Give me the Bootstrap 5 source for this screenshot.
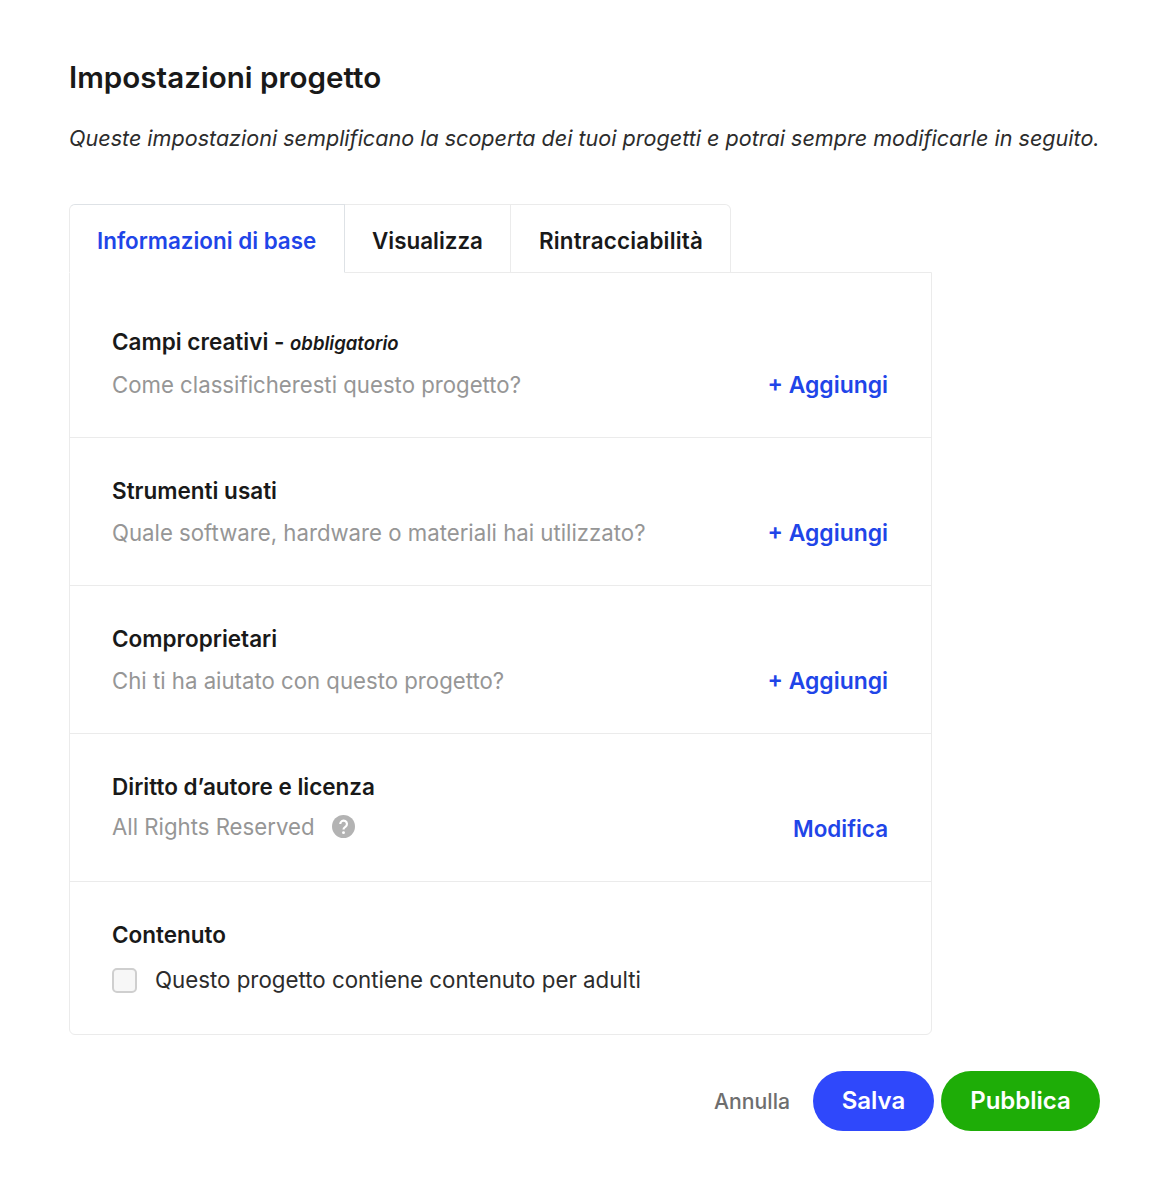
<!DOCTYPE html>
<html lang="it"><head><meta charset="utf-8"><title>Impostazioni progetto</title>
<link href="https://cdn.jsdelivr.net/npm/bootstrap@5.3.0/dist/css/bootstrap.min.css" rel="stylesheet">
<style>
body{font-family:Inter,"Liberation Sans",sans-serif;background:#fff;color:#191919;}
.page-wrap{padding:59px 70px 0 69px;}
.page-title{font-size:29.6px;font-weight:600;line-height:36px;margin:0 0 27px;color:#191919;}
.page-sub{font-size:21.57px;font-style:italic;line-height:32px;margin:0 0 50px;color:#2c2c2c;white-space:nowrap;}
.settings{width:863px;}
.settings .nav-tabs{border:0;margin-bottom:-1px;position:relative;z-index:1;}
.settings .nav-link{height:69px;padding:5px 0 0 27px;font-size:22.4px;font-weight:600;color:#191919;border:1px solid #ebebeb;border-left:0;border-radius:0;display:flex;align-items:center;margin:0;background:#fff;}
.settings .nav-item:nth-child(2) .nav-link{width:166px;}
.settings .nav-item:first-child .nav-link{border-left:1px solid #ebebeb;border-radius:6px 0 0 0;border-bottom-color:#fff;color:#1f45e8;width:276px;padding-left:27px;}
.settings .nav-item:last-child .nav-link{border-radius:0 6px 0 0;width:220px;padding-left:28px;letter-spacing:.2px;}
.panel-box{border:1px solid #ebebeb;border-radius:0 0 6px 6px;height:763px;}
.panel-box .list-group-item{border-color:#ebebeb;padding:38px 43px 0 42px;height:148px;background:transparent;}
.panel-box .list-group-item:first-child{height:165px;padding-top:54px;}
.panel-box .list-group-item:last-child{height:152px;}
.row-title{font-size:22.5px;font-weight:600;line-height:30px;color:#191919;}
.row-title em{font-size:18.5px;font-weight:600;}
.row-body{margin-top:12px;}
.row-body-licence{margin-top:10px;}
.row-body-licence .row-link{position:relative;top:2px;font-size:22.4px;}
.row-body-check{margin-top:15px;}
.row-hint{font-size:22.2px;line-height:30px;color:#969696;}
.row-link{font-size:22.9px;font-weight:600;color:#1f45e8;text-decoration:none;line-height:30px;}
.help-dot{width:23px;height:23px;margin-left:18px;vertical-align:-3px;}
.form-check-input.adult{width:25px;height:25px;margin:0;background-color:#f7f7f7;border:2px solid #cfcfcf;border-radius:5px;}
.adult-label{font-size:22.3px;color:#2c2c2c;line-height:30px;margin-left:18px;}
.cancel-link{font-size:21.2px;font-weight:500;color:#6e6e6e;text-decoration:none;margin-right:16px;padding-top:2px;}
.pill{height:60px;border-radius:30px;border:0;color:#fff;font-size:24px;font-weight:600;padding:0;display:flex;align-items:center;justify-content:center;}
.pill-blue{width:121px;background:#2f48fb;}
.pill-green{width:159px;background:#1ead07;}
.pill-blue:hover{background:#2f48fb;color:#fff;}.pill-green:hover{background:#1ead07;color:#fff;}
.actions{margin-top:36px;gap:7px;}
</style></head><body>
<div class="page-wrap">
<h1 class="page-title">Impostazioni progetto</h1>
<p class="page-sub">Queste impostazioni semplificano la scoperta dei tuoi progetti e potrai sempre modificarle in seguito.</p>
<div class="settings">
<ul class="nav nav-tabs">
<li class="nav-item"><a class="nav-link active" href="#">Informazioni di base</a></li>
<li class="nav-item"><a class="nav-link" href="#">Visualizza</a></li>
<li class="nav-item"><a class="nav-link" href="#">Rintracciabilità</a></li>
</ul>
<div class="panel-box">
<div class="list-group list-group-flush">
<div class="list-group-item"><div class="row-title">Campi creativi - <em>obbligatorio</em></div>
<div class="d-flex justify-content-between row-body"><span class="row-hint">Come classificheresti questo progetto?</span><a class="row-link" href="#">+ Aggiungi</a></div></div>
<div class="list-group-item"><div class="row-title">Strumenti usati</div>
<div class="d-flex justify-content-between row-body"><span class="row-hint">Quale software, hardware o materiali hai utilizzato?</span><a class="row-link" href="#">+ Aggiungi</a></div></div>
<div class="list-group-item"><div class="row-title">Comproprietari</div>
<div class="d-flex justify-content-between row-body"><span class="row-hint">Chi ti ha aiutato con questo progetto?</span><a class="row-link" href="#">+ Aggiungi</a></div></div>
<div class="list-group-item"><div class="row-title">Diritto d’autore e licenza</div>
<div class="d-flex justify-content-between row-body-licence"><span class="row-hint">All Rights Reserved<svg class="help-dot" viewBox="0 0 24 24"><circle cx="12" cy="12" r="12" fill="#b3b3b3"/><path d="M8.6 9.4a3.5 3.5 0 1 1 5.4 2.9c-1.2.8-2 1.3-2 2.7" fill="none" stroke="#fff" stroke-width="2.3"/><circle cx="12" cy="18.4" r="1.5" fill="#fff"/></svg></span><a class="row-link" href="#">Modifica</a></div></div>
<div class="list-group-item"><div class="row-title">Contenuto</div>
<div class="form-check d-flex align-items-center p-0 row-body-check"><input class="form-check-input adult" type="checkbox" id="adult"><label class="adult-label" for="adult">Questo progetto contiene contenuto per adulti</label></div></div>
</div></div>
</div>
<div class="actions d-flex justify-content-end align-items-center">
<a class="cancel-link" href="#">Annulla</a>
<button class="btn pill pill-blue" type="button">Salva</button>
<button class="btn pill pill-green" type="button">Pubblica</button>
</div>
</div>
<script src="https://cdn.jsdelivr.net/npm/bootstrap@5.3.0/dist/js/bootstrap.bundle.min.js"></script>
</body></html>
